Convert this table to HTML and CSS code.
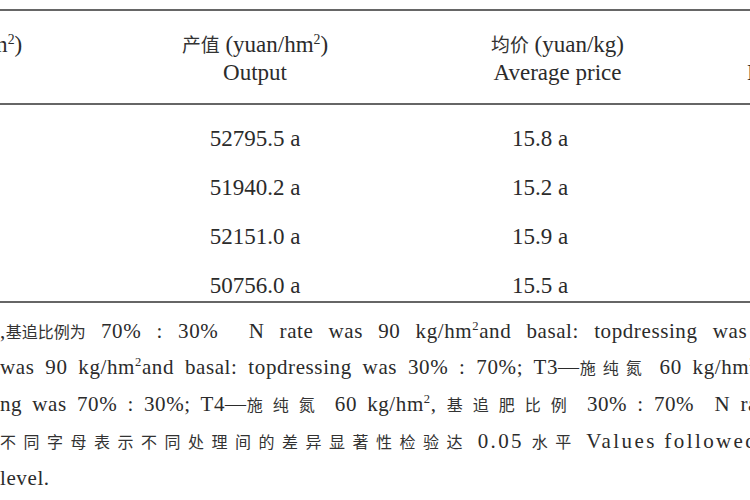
FILE: index.html
```html
<!DOCTYPE html>
<html lang="zh">
<head>
  <meta charset="UTF-8">
  <meta name="viewport" content="width=device-width, initial-scale=1.0">
  <title>不同施氮处理的产值与均价</title>
  <link rel="stylesheet" href="styles.css">
</head>
<body>
  <div class="page">
    <table class="data">
      <colgroup>
        <col class="c-treat">
        <col class="c-yield">
        <col class="c-output">
        <col class="c-price">
        <col class="c-net">
      </colgroup>
      <thead>
        <tr>
          <th><span class="zh">处理</span><br>Treatment</th>
          <th><span class="zh">产量</span> (kg/hm<sup>2</sup>)<br>Yield</th>
          <th><span class="zh">产值</span> (yuan/hm<sup>2</sup>)<br>Output</th>
          <th><span class="zh">均价</span> (yuan/kg)<br>Average price</th>
          <th><span class="zh">纯收益率</span><br>Net return</th>
        </tr>
      </thead>
      <tbody>
        <tr><td>T1</td><td>3341.5 a</td><td>52795.5 a</td><td class="price">15.8 a</td><td>41.2 a</td></tr>
        <tr><td>T2</td><td>3417.1 a</td><td>51940.2 a</td><td class="price">15.2 a</td><td>40.5 a</td></tr>
        <tr><td>T3</td><td>3280.0 a</td><td>52151.0 a</td><td class="price">15.9 a</td><td>42.0 a</td></tr>
        <tr><td>T4</td><td>3274.6 a</td><td>50756.0 a</td><td class="price">15.5 a</td><td>39.8 a</td></tr>
      </tbody>
    </table>

    <!-- footnote lines are kept as typeset in the journal, one line per row -->
    <div class="notes">
      <p class="l1">,<span class="zh">基追比例为</span> 70% : 30%&nbsp; N rate was 90 kg/hm<sup>2</sup>and basal: topdressing was 70% : 30%; T2—<span class="zh">施纯氮</span> 90 kg/hm<sup>2</sup></p>
      <p class="l2">was 90 kg/hm<sup>2</sup>and basal: topdressing was 30% : 70%; T3—<span class="zh">施纯氮</span> 60 kg/hm<sup>2</sup>, <span class="zh">基追比例</span></p>
      <p class="l3">ng was 70% : 30%; T4—<span class="zh">施纯氮</span> 60 kg/hm<sup>2</sup>, <span class="zh">基追肥比例</span> 30% : 70%&nbsp; N rate was 60 kg/hm<sup>2</sup></p>
      <p class="l4"><span class="zh">不同字母表示不同处理间的差异显著性检验达</span> 0.05 <span class="zh">水平</span> Values followed by different letters</p>
      <p class="l5">level.</p>
    </div>
  </div>
</body>
</html>
```

FILE: styles.css
```css
body { margin: 0; background: #fff; color: #2b2b2b; font-family: "Liberation Serif", "Noto Sans CJK SC", serif; }
.page { width: 750px; height: 500px; overflow: hidden; }

.data { border-collapse: collapse; table-layout: fixed; width: 1208px; margin: 9px 0 0 -330px; border-top: 2px solid #666; font-size: 23px; }
.c-treat { width: 145px; }
.c-yield { width: 290px; }
.c-output { width: 300px; }
.c-price { width: 305px; }
.c-net { width: 168px; }
th { font-weight: normal; line-height: 28px; padding: 19px 0 16px; border-bottom: 2px solid #666; text-align: center; white-space: nowrap; }
td { text-align: center; line-height: 24px; padding: 12.5px 0; white-space: nowrap; }
tbody tr:first-child td { padding-top: 21.5px; }
tbody tr:last-child td { padding-bottom: 3px; border-bottom: 2px solid #666; }
.price { padding-right: 35px; }

.zh { font-family: "Noto Sans CJK SC", sans-serif; font-size: 0.82em; color: #333; }
sup { font-size: 0.6em; line-height: 0; vertical-align: 0.6em; }

.notes { margin-top: 10px; font-size: 21px; line-height: 36.75px; letter-spacing: 0.6px; }
.notes p { margin: 0; white-space: nowrap; }
.notes .zh { font-size: 16px; }
.l1 { margin-left: 4px; word-spacing: 9.3px; }
.l1 .zh { letter-spacing: 0; }
.l2 { margin-left: -8px; word-spacing: 5px; }
.l2 .zh { letter-spacing: 7px; }
.l3 { margin-left: -11px; word-spacing: 4.3px; }
.l3 .zh { letter-spacing: 10px; }
.l4 { margin-left: -25px; letter-spacing: 2.4px; }
.l4 .zh { letter-spacing: 7.5px; }
.l5 { margin-left: -17px; }
```
